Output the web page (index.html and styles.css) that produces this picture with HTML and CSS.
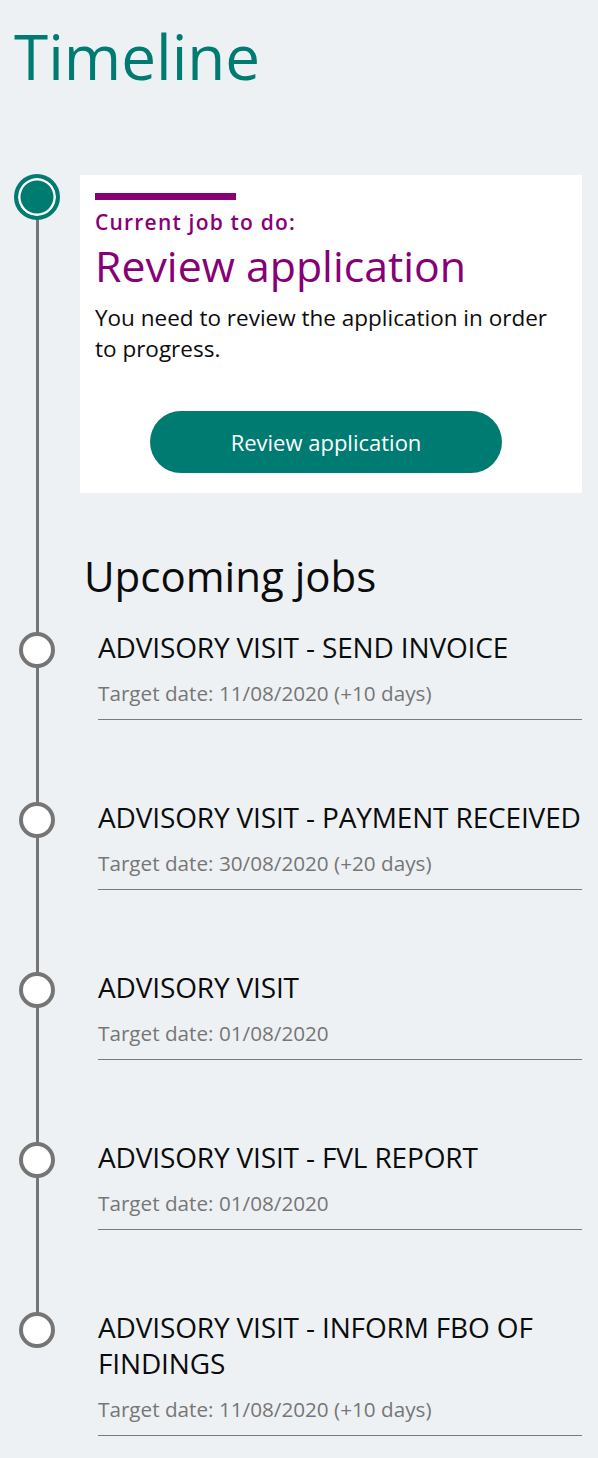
FILE: index.html
```html
<!DOCTYPE html>
<html lang="en">
<head>
<meta charset="utf-8">
<title>Timeline</title>
<link rel="stylesheet" href="styles.css">
</head>
<body>
<main class="page">
  <h1 class="page-title">Timeline</h1>
  <div class="timeline">
    <section class="row-current">
      <span class="marker marker-current"></span>
      <div class="card">
        <div class="card-bar"></div>
        <p class="card-eyebrow">Current job to do:</p>
        <h2 class="card-title">Review application</h2>
        <p class="card-text">You need to review the application in order to progress.</p>
        <button class="btn" type="button">Review application</button>
      </div>
    </section>
    <h2 class="upcoming-title">Upcoming jobs</h2>
    <ul class="jobs">
      <li class="job">
        <span class="marker"></span>
        <div class="job-body">
          <h3 class="job-title">ADVISORY VISIT - SEND INVOICE</h3>
          <p class="job-date">Target date: 11/08/2020 (+10 days)</p>
        </div>
      </li>
      <li class="job">
        <span class="marker"></span>
        <div class="job-body">
          <h3 class="job-title">ADVISORY VISIT - PAYMENT RECEIVED</h3>
          <p class="job-date">Target date: 30/08/2020 (+20 days)</p>
        </div>
      </li>
      <li class="job">
        <span class="marker"></span>
        <div class="job-body">
          <h3 class="job-title">ADVISORY VISIT</h3>
          <p class="job-date">Target date: 01/08/2020</p>
        </div>
      </li>
      <li class="job">
        <span class="marker"></span>
        <div class="job-body">
          <h3 class="job-title">ADVISORY VISIT - FVL REPORT</h3>
          <p class="job-date">Target date: 01/08/2020</p>
        </div>
      </li>
      <li class="job">
        <span class="marker"></span>
        <div class="job-body">
          <h3 class="job-title">ADVISORY VISIT - INFORM FBO OF FINDINGS</h3>
          <p class="job-date">Target date: 11/08/2020 (+10 days)</p>
        </div>
      </li>
    </ul>
  </div>
</main>
</body>
</html>
```

FILE: styles.css
```css
html, body {
  margin: 0;
  padding: 0;
}

body {
  background: #eef1f4;
  font-family: "Open Sans", "Noto Sans", sans-serif;
  color: #0b0c0c;
}

.page {
  padding-bottom: 22px;
}

.page-title {
  margin: 20px 0 0 14px;
  font-size: 62px;
  line-height: 72px;
  font-weight: 400;
  color: #007b71;
}

.timeline {
  position: relative;
  margin-top: 82px;
  padding-right: 16px;
}

.timeline::before {
  content: "";
  position: absolute;
  left: 36px;
  top: 23px;
  bottom: 106px;
  width: 3px;
  background: #757575;
}

.row-current {
  display: grid;
  grid-template-columns: 80px 1fr;
  align-items: start;
}

.marker {
  position: relative;
  z-index: 1;
  display: block;
  box-sizing: border-box;
  border-radius: 50%;
}

.marker-current {
  margin-left: 14px;
  width: 46px;
  height: 46px;
  border: 4px solid #007b71;
  background: #007b71;
  box-shadow: inset 0 0 0 2.5px #ffffff;
}

.card {
  margin-top: 1px;
  background: #ffffff;
  padding: 18px 30px 20px 15px;
}

.card-bar {
  width: 141px;
  height: 7px;
  background: #870075;
}

.card-eyebrow {
  margin: 10px 0 0;
  font-size: 21px;
  line-height: 24px;
  font-weight: 600;
  letter-spacing: 1.2px;
  color: #870075;
}

.card-title {
  margin: 4px 0 0;
  font-size: 42.8px;
  line-height: 56px;
  font-weight: 400;
  color: #870075;
}

.card-text {
  margin: 8px 0 0;
  font-size: 22.5px;
  line-height: 31px;
}

.btn {
  display: block;
  margin: 47px 0 0 55px;
  width: 352px;
  height: 62px;
  padding: 0;
  border: 0;
  border-radius: 31px;
  background: #007b71;
  color: #ffffff;
  font-family: "Open Sans", "Noto Sans", sans-serif;
  font-size: 22px;
  line-height: 62px;
  font-weight: 400;
}

.upcoming-title {
  margin: 58px 0 0 84px;
  font-size: 42px;
  line-height: 50px;
  font-weight: 400;
}

.jobs {
  list-style: none;
  margin: 28px 0 0;
  padding: 0;
}

.job {
  display: grid;
  grid-template-columns: 98px 1fr;
  align-items: start;
  margin-bottom: 79px;
}

.job:last-child {
  margin-bottom: 0;
}

.job .marker {
  margin: 3px 0 0 19px;
  width: 36px;
  height: 36px;
  border: 4px solid #757575;
  background: #ffffff;
}

.job-title {
  margin: 0;
  font-size: 28px;
  line-height: 36px;
  font-weight: 400;
  letter-spacing: -0.15px;
}

.job-date {
  margin: 14px 0 0;
  padding-bottom: 12px;
  border-bottom: 1px solid #7a7a7a;
  font-size: 20.7px;
  line-height: 28px;
  color: #767676;
}
```
